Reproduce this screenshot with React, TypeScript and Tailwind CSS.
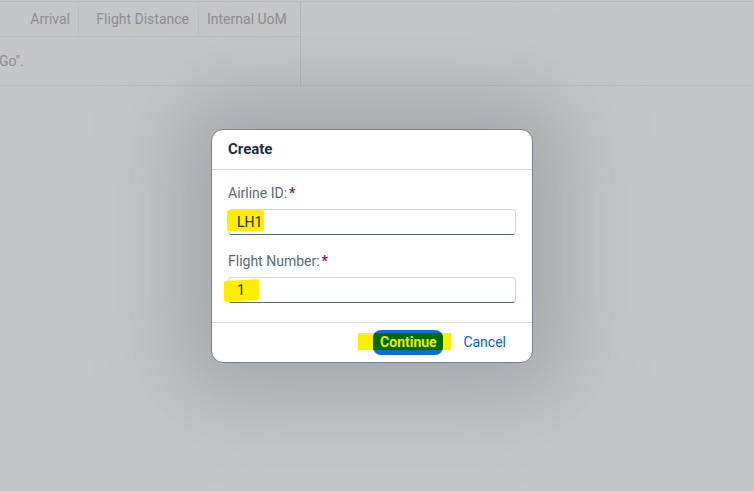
import { useState } from "react";

const font = { fontFamily: "Roboto, 'Noto Sans', Arial, sans-serif" };

function FlightTable() {
  return (
    <div className="border-t border-b border-[#b9bbbd] w-full">
      <div className="w-[301px] border-r border-[#b4b6b8]">
        <div className="flex h-[35px] border-b border-[#bcbec0] text-[14px] text-[#8b8e91]">
          <div className="w-[79px] flex items-center justify-end pr-[8px] border-r border-[#bcbec0]">Arrival</div>
          <div className="w-[120px] flex items-center justify-end pr-[9px] border-r border-[#bcbec0]">Flight Distance</div>
          <div className="flex-1 flex items-center pl-[8px]">Internal UoM</div>
        </div>
        <div className="h-[48px] flex items-center text-[14px] text-[#8b8e91] -ml-[1px]">Go".</div>
      </div>
    </div>
  );
}

function Field({ label, value, mark }: { label: string; value: string; mark: string }) {
  return (
    <div className="flex flex-col">
      <label className="text-[14px] text-[#556b82] h-[20px] leading-[20px]">
        {label}
        <span className="text-[#ba066c] ml-[2px] font-bold">*</span>
      </label>
      <div className="relative mt-[6px] h-[26px] rounded-[4px] border border-[#d5d9de] border-b-[#556b82] bg-white">
        <span className={`absolute ${mark} bg-[#ffee00] rounded-[2px]`} />
        <span className="relative pl-[8px] leading-[24px] text-[14px] text-[#1d2d3e]">{value}</span>
      </div>
    </div>
  );
}

export default function App() {
  const [open, setOpen] = useState(true);

  return (
    <div className="relative w-[754px] h-[491px] bg-[#c5c6c7] overflow-hidden" style={font}>
      <div className="pt-[1px]">
        <FlightTable />
      </div>

      {open && (
        <div className="absolute inset-0 flex items-center justify-center">
          <div className="mr-[10px] w-[322px] rounded-[12px] bg-white border border-[#75808b] shadow-[0_0_80px_36px_rgba(115,120,126,0.38)] overflow-hidden">
            <div className="h-[40px] flex items-center px-[16px] border-b border-[#d9dcdf]">
              <h2 className="text-[15px] font-bold text-[#1d2d3e]">Create</h2>
            </div>
            <div className="px-[16px] pt-[13px] pb-[19px] flex flex-col gap-[16px]">
              <Field label="Airline ID:" value="LH1" mark="left-[-2px] top-[0px] w-[37px] h-[21px]" />
              <Field label="Flight Number:" value="1" mark="left-[-5px] top-[2px] w-[35px] h-[21px] -skew-y-3" />
            </div>
            <div className="relative h-[40px] border-t border-[#d9dcdf] flex items-center justify-end pr-[26px] gap-[20px]">
              <span className="absolute left-[146px] top-[10px] w-[93px] h-[17px] bg-[#ffee00]" />
              <button className="relative w-[70px] h-[25px] rounded-[8px] bg-[#0a6ed1] overflow-hidden">
                <span className="absolute left-0 right-0 top-[3px] h-[17px] bg-[#006a00]" />
                <span className="relative text-[14px] font-bold text-[#e8f000] leading-[22px]">Continue</span>
              </button>
              <button onClick={() => setOpen(false)} className="text-[14px] text-[#0064d9]">
                Cancel
              </button>
            </div>
          </div>
        </div>
      )}
    </div>
  );
}
